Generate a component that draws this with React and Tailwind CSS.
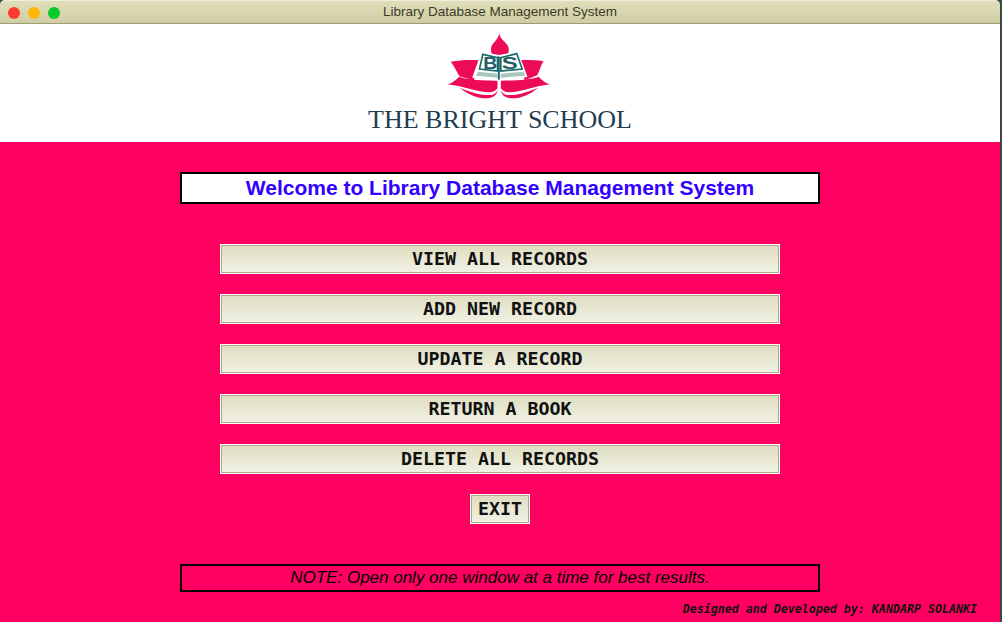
const MENU = ['VIEW ALL RECORDS', 'ADD NEW RECORD', 'UPDATE A RECORD', 'RETURN A BOOK', 'DELETE ALL RECORDS'];

function MenuButton({ label, className = '' }) {
  return (
    <div className={`h-[30px] border border-white bg-white ${className}`}>
      <div className="flex h-full items-center justify-center border border-[#b0aa84] bg-gradient-to-b from-[#dfdec2] to-[#f0f1e3] font-['DejaVu_Sans_Mono',monospace] text-[18.3px] font-bold whitespace-pre text-[#111]">
        {label}
      </div>
    </div>
  );
}

function Logo() {
  return (
    <svg width="107" height="70" viewBox="259 20 320 210" className="block">
      {/* top petal */}
      <path d="M415 28 C420 50 445 56 444 76 C444 84 440 90 435 96 L398 96 C393 90 390 82 390 74 C391 56 410 50 415 28Z" fill="#ee0b55" />
      {/* upper side petals */}
      <path d="M270 112 C298 107 328 106 358 108 L338 170 C322 162 306 160 296 156 C288 142 280 126 270 112Z" fill="#ee0b55" />
      <path d="M548 110 C520 106 494 106 468 108 L492 168 C506 160 520 158 530 152 C536 138 540 124 548 110Z" fill="#ee0b55" />
      {/* lower petals */}
      <path d="M260 180 C274 177 284 168 295 157 C318 166 368 170 410 168 L410 192 C404 200 396 204 384 204 C350 204 312 186 260 180Z" fill="#ee0b55" />
      <path d="M568 180 C554 177 544 168 533 157 C510 166 462 170 420 168 L420 192 C426 200 434 204 446 204 C480 204 516 186 568 180Z" fill="#ee0b55" />
      <path d="M296 190 C322 200 356 214 392 212 C400 211 406 206 410 198 C408 212 398 221 380 222 C350 223 322 210 296 190Z" fill="#ee0b55" />
      <path d="M532 190 C506 200 474 214 438 212 C430 211 424 206 420 198 C422 212 432 221 450 222 C480 223 508 210 532 190Z" fill="#ee0b55" />
      {/* open book */}
      <path d="M362 82 L414 92 L472 82 L500 158 L414 170 L334 160Z" fill="#ffffff" />
      <path d="M366 90 L410 100 L410 140 L356 134Z" fill="#ffffff" stroke="#1f6a6c" strokeWidth="5" />
      <path d="M468 88 L420 100 L420 140 L484 134Z" fill="#ffffff" stroke="#1f6a6c" strokeWidth="5" />
      <path d="M352 142 L410 148 L410 160 L346 154Z" fill="#a9c6ba" />
      <path d="M420 148 L488 142 L494 154 L420 160Z" fill="#a9c6ba" />
      <path d="M414 96 L414 166" stroke="#1f6a6c" strokeWidth="6" />
      <text x="367" y="134" textLength="42" lengthAdjust="spacingAndGlyphs" fontFamily="'Liberation Sans',sans-serif" fontWeight="700" fontSize="50" fill="#1f5f66">B</text>
      <text x="423" y="134" textLength="48" lengthAdjust="spacingAndGlyphs" fontFamily="'Liberation Sans',sans-serif" fontWeight="700" fontSize="50" fill="#1f5f66">S</text>
    </svg>
  );
}

export default function App() {
  return (
    <div className="flex h-[622px] w-[1002px] overflow-hidden bg-[#3a4a4a] font-['Liberation_Sans',sans-serif]">
      <div className="flex w-[1000px] flex-col">
        {/* title bar */}
        <div className="relative flex h-[24px] shrink-0 items-center justify-center rounded-t-[5px] border-t border-[#eeeeda] border-b border-b-[#a09c72] bg-gradient-to-b from-[#e0dfba] to-[#cfcda4]">
          <div className="absolute left-[8px] top-[6px] flex gap-[8px]">
            <span className="h-[12px] w-[12px] rounded-full bg-[#fe3b30]" />
            <span className="h-[12px] w-[12px] rounded-full bg-[#feb707]" />
            <span className="h-[12px] w-[12px] rounded-full bg-[#07cb2e]" />
          </div>
          <span className="text-[13.5px] text-[#3c3a28]">Library Database Management System</span>
        </div>

        {/* school header */}
        <div className="flex h-[118px] shrink-0 flex-col items-center bg-white pt-[7px]">
          <Logo />
          <div className="mt-[4px] font-['Liberation_Serif',serif] text-[26px] leading-[30px] text-[#1f3d50]">THE BRIGHT SCHOOL</div>
        </div>

        {/* main panel */}
        <div className="flex flex-1 flex-col items-center bg-[#ff0060] pt-[30px]">
          <div className="flex h-[32px] w-[640px] items-center justify-center border-2 border-black bg-white text-[21px] font-bold text-[#3300ff]">
            Welcome to Library Database Management System
          </div>

          <div className="mt-[40px] flex w-[560px] flex-col gap-[20px]">
            {MENU.map((label) => (
              <MenuButton key={label} label={label} />
            ))}
          </div>

          <MenuButton label="EXIT" className="mt-[20px] w-[60px]" />

          <div className="mt-[40px] flex h-[28px] w-[640px] items-center justify-center border-2 border-black text-[17px] text-black italic">
            NOTE: Open only one window at a time for best results.
          </div>

          <div className="mt-[9px] w-full pr-[23px] text-right font-['DejaVu_Sans_Mono',monospace] text-[11.65px] font-bold text-[#111] italic">
            Designed and Developed by: KANDARP SOLANKI
          </div>
        </div>
      </div>
    </div>
  );
}
